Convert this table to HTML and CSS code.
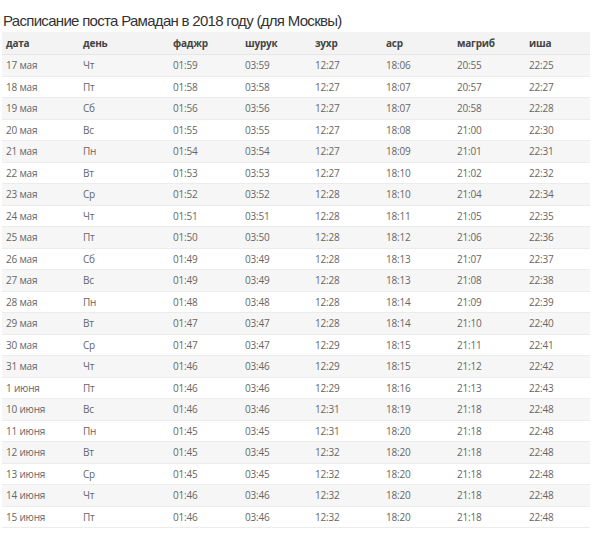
FILE: index.html
```html
<!DOCTYPE html>
<html lang="ru">
<head>
<meta charset="utf-8">
<title>Расписание поста Рамадан в 2018 году</title>
<link rel="stylesheet" href="styles.css">
</head>
<body>
<h1 class="title">Расписание поста Рамадан в 2018 году (для Москвы)</h1>
<table class="sched">
<colgroup>
<col class="c1"><col class="c2"><col class="c3"><col class="c4"><col class="c5"><col class="c6"><col class="c7"><col class="c8">
</colgroup>
<thead>
<tr><th>дата</th><th>день</th><th>фаджр</th><th>шурук</th><th>зухр</th><th>аср</th><th>магриб</th><th>иша</th></tr>
</thead>
<tbody>
<tr><td>17 мая</td><td>Чт</td><td>01:59</td><td>03:59</td><td>12:27</td><td>18:06</td><td>20:55</td><td>22:25</td></tr>
<tr><td>18 мая</td><td>Пт</td><td>01:58</td><td>03:58</td><td>12:27</td><td>18:07</td><td>20:57</td><td>22:27</td></tr>
<tr><td>19 мая</td><td>Сб</td><td>01:56</td><td>03:56</td><td>12:27</td><td>18:07</td><td>20:58</td><td>22:28</td></tr>
<tr><td>20 мая</td><td>Вс</td><td>01:55</td><td>03:55</td><td>12:27</td><td>18:08</td><td>21:00</td><td>22:30</td></tr>
<tr><td>21 мая</td><td>Пн</td><td>01:54</td><td>03:54</td><td>12:27</td><td>18:09</td><td>21:01</td><td>22:31</td></tr>
<tr><td>22 мая</td><td>Вт</td><td>01:53</td><td>03:53</td><td>12:27</td><td>18:10</td><td>21:02</td><td>22:32</td></tr>
<tr><td>23 мая</td><td>Ср</td><td>01:52</td><td>03:52</td><td>12:28</td><td>18:10</td><td>21:04</td><td>22:34</td></tr>
<tr><td>24 мая</td><td>Чт</td><td>01:51</td><td>03:51</td><td>12:28</td><td>18:11</td><td>21:05</td><td>22:35</td></tr>
<tr><td>25 мая</td><td>Пт</td><td>01:50</td><td>03:50</td><td>12:28</td><td>18:12</td><td>21:06</td><td>22:36</td></tr>
<tr><td>26 мая</td><td>Сб</td><td>01:49</td><td>03:49</td><td>12:28</td><td>18:13</td><td>21:07</td><td>22:37</td></tr>
<tr><td>27 мая</td><td>Вс</td><td>01:49</td><td>03:49</td><td>12:28</td><td>18:13</td><td>21:08</td><td>22:38</td></tr>
<tr><td>28 мая</td><td>Пн</td><td>01:48</td><td>03:48</td><td>12:28</td><td>18:14</td><td>21:09</td><td>22:39</td></tr>
<tr><td>29 мая</td><td>Вт</td><td>01:47</td><td>03:47</td><td>12:28</td><td>18:14</td><td>21:10</td><td>22:40</td></tr>
<tr><td>30 мая</td><td>Ср</td><td>01:47</td><td>03:47</td><td>12:29</td><td>18:15</td><td>21:11</td><td>22:41</td></tr>
<tr><td>31 мая</td><td>Чт</td><td>01:46</td><td>03:46</td><td>12:29</td><td>18:15</td><td>21:12</td><td>22:42</td></tr>
<tr><td>1 июня</td><td>Пт</td><td>01:46</td><td>03:46</td><td>12:29</td><td>18:16</td><td>21:13</td><td>22:43</td></tr>
<tr><td>10 июня</td><td>Вс</td><td>01:46</td><td>03:46</td><td>12:31</td><td>18:19</td><td>21:18</td><td>22:48</td></tr>
<tr><td>11 июня</td><td>Пн</td><td>01:45</td><td>03:45</td><td>12:31</td><td>18:20</td><td>21:18</td><td>22:48</td></tr>
<tr><td>12 июня</td><td>Вт</td><td>01:45</td><td>03:45</td><td>12:32</td><td>18:20</td><td>21:18</td><td>22:48</td></tr>
<tr><td>13 июня</td><td>Ср</td><td>01:45</td><td>03:45</td><td>12:32</td><td>18:20</td><td>21:18</td><td>22:48</td></tr>
<tr><td>14 июня</td><td>Чт</td><td>01:46</td><td>03:46</td><td>12:32</td><td>18:20</td><td>21:18</td><td>22:48</td></tr>
<tr><td>15 июня</td><td>Пт</td><td>01:46</td><td>03:46</td><td>12:32</td><td>18:20</td><td>21:18</td><td>22:48</td></tr>
</tbody>
</table>
</body>
</html>
```
FILE: styles.css
```css
html, body {
  margin: 0;
  padding: 0;
  background: #ffffff;
}
body {
  padding: 0 10px 0 2px;
  font-family: "Open Sans", "Liberation Sans", sans-serif;
}
.title {
  margin: 0;
  padding: 12px 0 0 1px;
  height: 20px;
  font-family: "Liberation Sans", Arial, sans-serif;
  font-weight: normal;
  font-size: 15px;
  letter-spacing: -0.7px;
  line-height: 18px;
  color: #333333;
}
.sched {
  border-collapse: collapse;
  table-layout: fixed;
  width: 588px;
  font-size: 10px;
  letter-spacing: -0.2px;
  color: #666666;
}
.c1 { width: 77px; }
.c2 { width: 90px; }
.c3 { width: 72px; }
.c4 { width: 70px; }
.c5 { width: 71px; }
.c6 { width: 71px; }
.c7 { width: 72px; }
.c8 { width: 65px; }
.sched th {
  height: 22px;
  padding: 0 0 0 4px;
  text-align: left;
  font-weight: bold;
  color: #444444;
  background: #f3f3f3;
  border-bottom: 1px solid #e6e6e6;
}
.sched td {
  height: 20.5px;
  padding: 0 0 0 4px;
  border-bottom: 1px solid #ececec;
}
.sched tbody tr:nth-child(odd) td {
  background: #f6f6f6;
}
```
